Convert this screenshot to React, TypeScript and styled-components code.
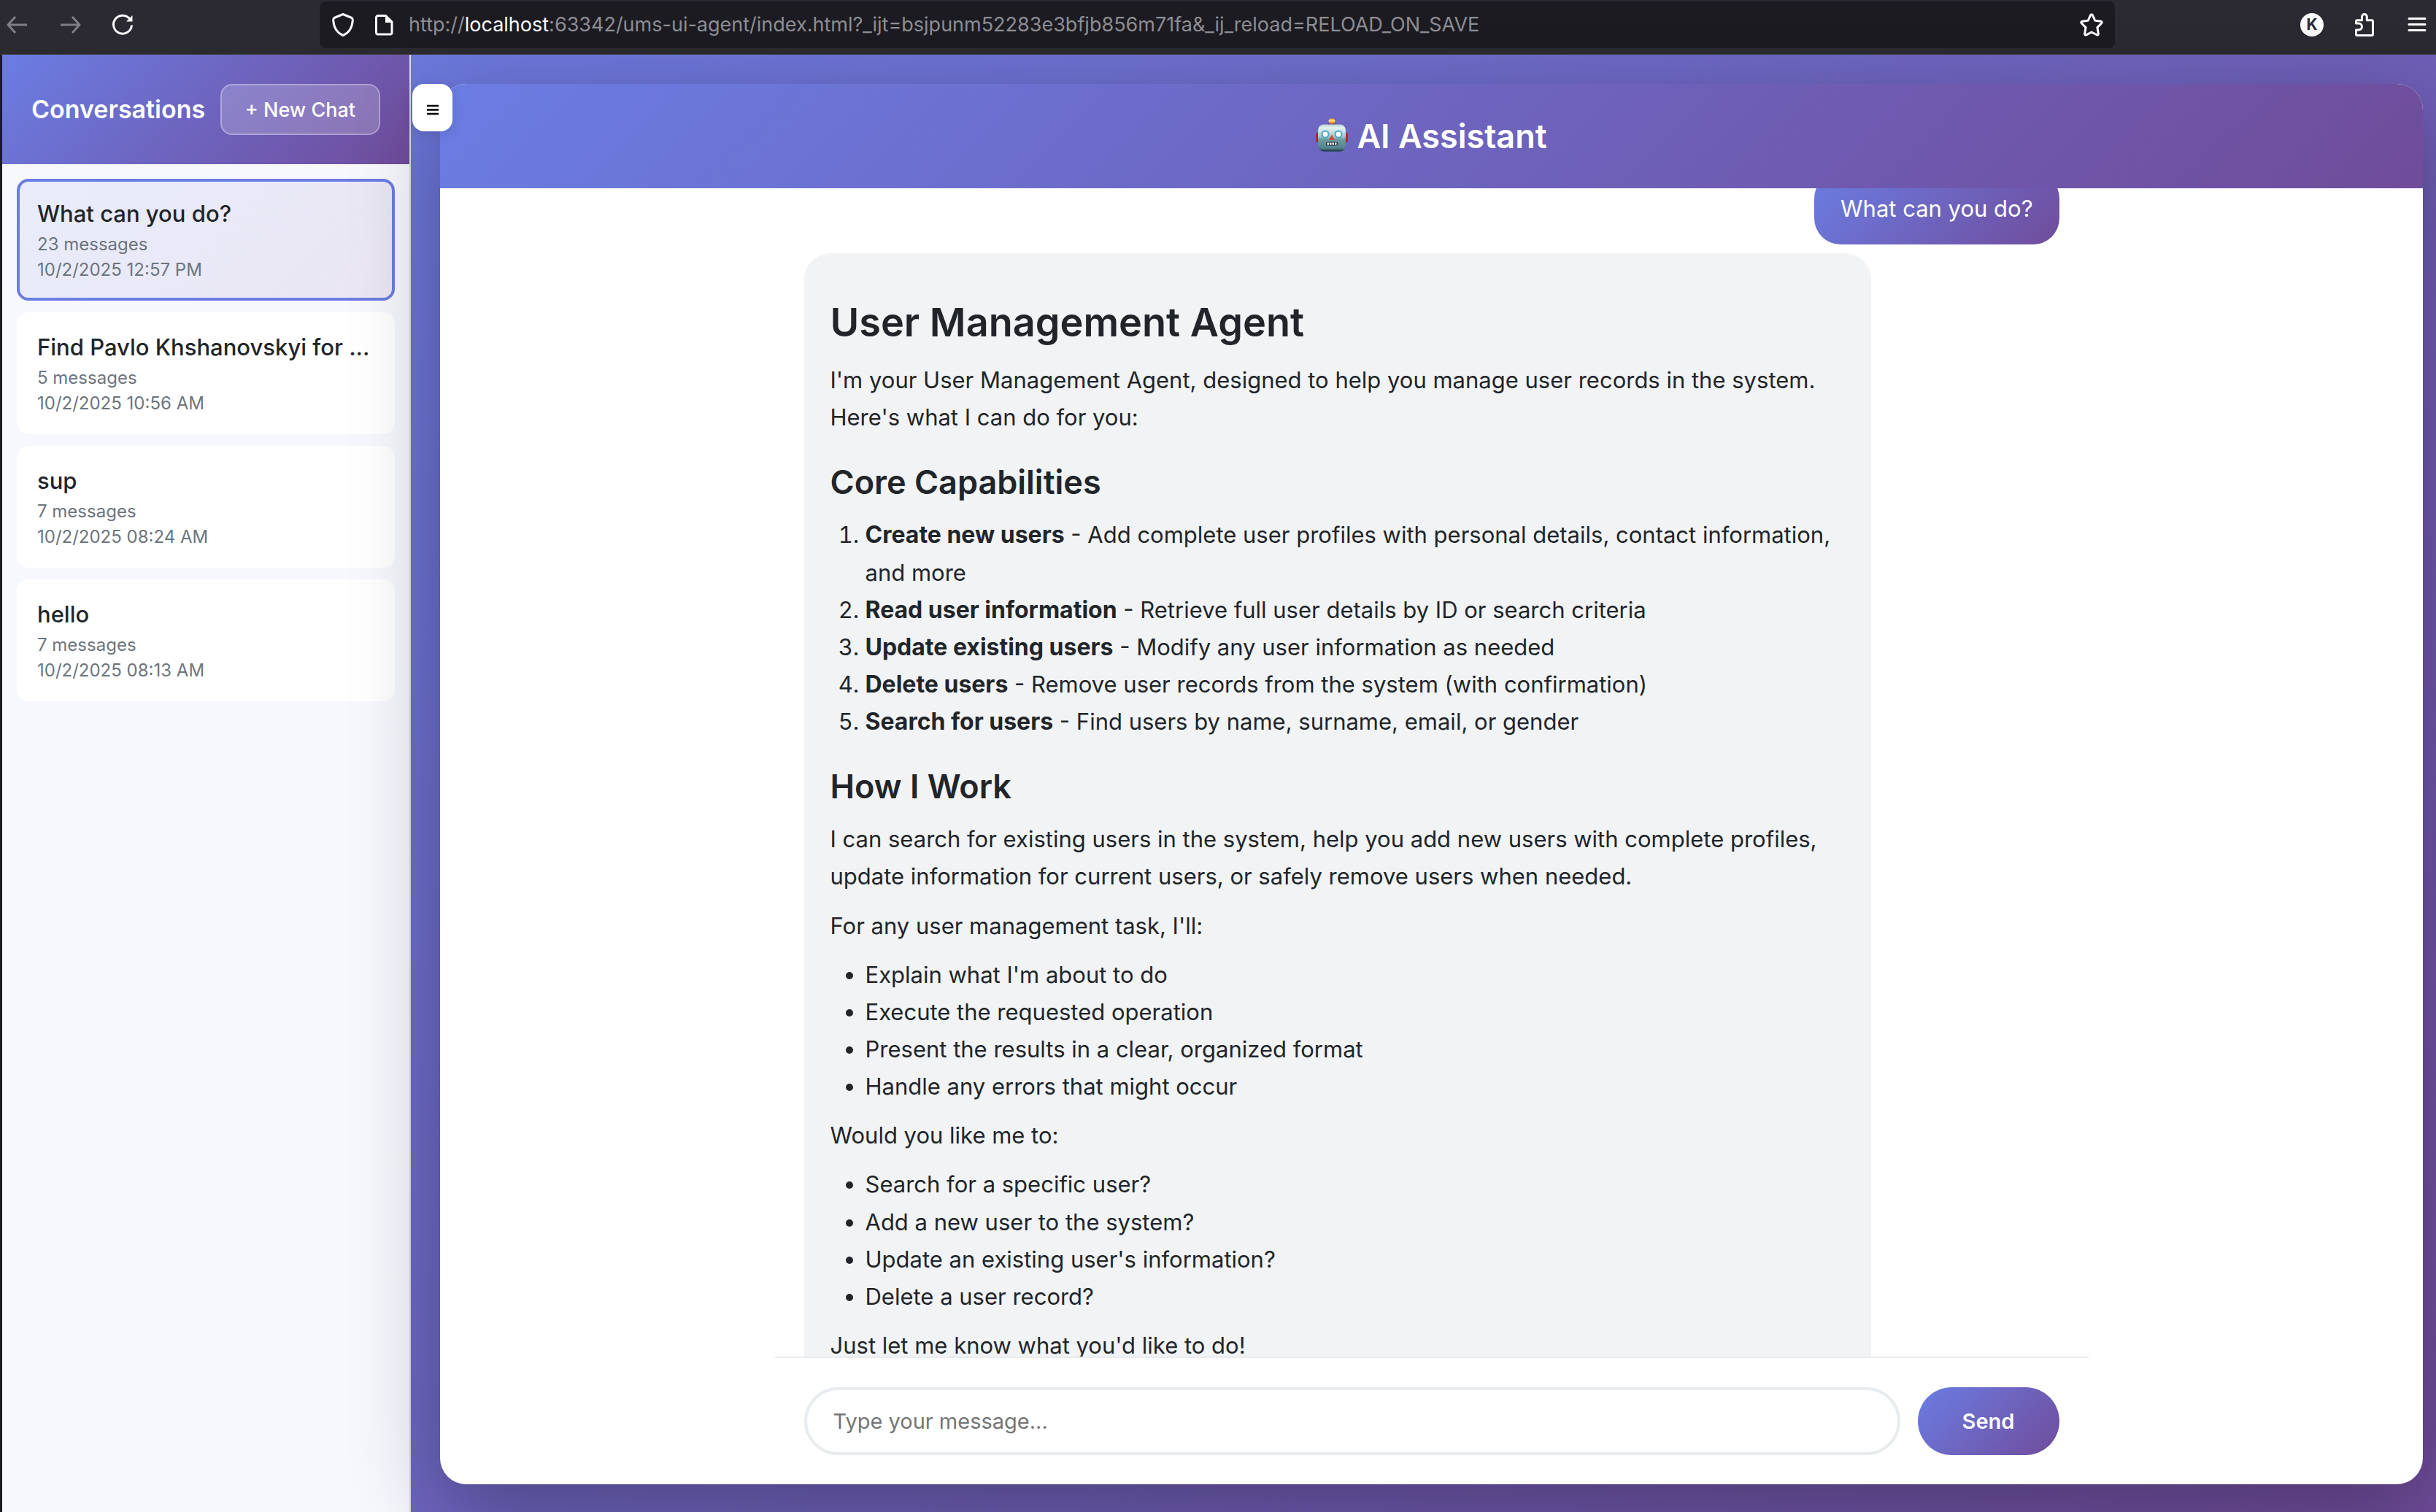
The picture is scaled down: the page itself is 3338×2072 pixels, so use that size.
import React, { useLayoutEffect, useRef } from "react";
import styled, { createGlobalStyle, css } from "styled-components";

const GlobalStyle = createGlobalStyle`
  *, *::before, *::after { box-sizing: border-box; }
  body {
    margin: 0;
    background: #1c1b22;
    font-family: Inter, "Noto Sans", sans-serif;
    color: #212529;
    overflow: hidden;
  }
  button, input { font-family: inherit; }
`;

const brand = "linear-gradient(135deg, #6b7de3 0%, #704c9b 100%)";

const Window = styled.div`
  display: flex;
  flex-direction: column;
  height: 100vh;
`;

/* ---------- browser toolbar ---------- */

const Toolbar = styled.header`
  display: flex;
  align-items: flex-start;
  flex: none;
  height: 75px;
  padding: 2px 6px 0 4px;
  background: linear-gradient(#2b2a33 0 75%, #2b2a2e);
  border-bottom: 1px solid #3d3c44;
`;

const IconGroup = styled.div<{ $gap: number }>`
  display: flex;
  align-items: center;
  gap: ${(p) => p.$gap}px;
  height: 64px;
`;

const ToolButton = styled.button<{ $dim?: boolean }>`
  display: flex;
  align-items: center;
  justify-content: center;
  width: 40px;
  height: 40px;
  padding: 0;
  border: 0;
  background: none;
  color: ${(p) => (p.$dim ? "#7f7e84" : "#fbfbfe")};
`;

const AddressBar = styled.div`
  display: flex;
  align-items: center;
  flex: 0 1 2460px;
  gap: 14px;
  height: 64px;
  margin-left: 250px;
  margin-right: auto;
  padding: 0 12px;
  border-radius: 8px;
  background: #1c1b22;
`;

const Address = styled.div`
  flex: 1;
  min-width: 0;
  overflow: hidden;
  white-space: nowrap;
  font-size: 27px;
  line-height: 40px;
  color: #8e8e93;
`;

const Host = styled.span`
  color: #fbfbfe;
`;

/* ---------- page ---------- */

const Page = styled.div`
  display: flex;
  flex: 1;
  min-height: 0;
  margin-left: 3px;
  background: ${brand};
`;

const Sidebar = styled.aside`
  flex: none;
  width: 560px;
  background: #f7f8fd;
  border-right: 2px solid #dcdce4;
`;

const SidebarHeader = styled.div`
  display: flex;
  align-items: center;
  justify-content: space-between;
  height: 150px;
  padding: 0 40px;
  background: ${brand};
  color: #fff;
`;

const SidebarTitle = styled.h2`
  margin: 0;
  font-size: 34px;
  font-weight: 600;
  line-height: 44px;
`;

const NewChat = styled.button`
  height: 70px;
  padding: 0 32px;
  border: 2px solid rgba(255, 255, 255, 0.3);
  border-radius: 16px;
  background: rgba(255, 255, 255, 0.2);
  color: #fff;
  font-size: 27px;
  font-weight: 500;
  white-space: nowrap;
`;

const ConversationList = styled.nav`
  display: flex;
  flex-direction: column;
  gap: 16px;
  padding: 20px;
`;

const Conversation = styled.button<{ $active?: boolean }>`
  display: flex;
  flex-direction: column;
  gap: 6px;
  padding: 24px;
  border: 4px solid transparent;
  border-radius: 16px;
  background: #fff;
  text-align: left;
  ${(p) =>
    p.$active &&
    css`
      border-color: #6b7de3;
      background: linear-gradient(135deg, #e8ecfb, #ebe6f3);
    `}
`;

const ConversationTitle = styled.span`
  align-self: stretch;
  overflow: hidden;
  text-overflow: ellipsis;
  white-space: nowrap;
  margin-bottom: 2px;
  font-size: 31px;
  font-weight: 500;
  line-height: 39px;
  color: #212529;
`;

const ConversationMeta = styled.span`
  font-size: 24px;
  line-height: 29px;
  color: #6c757d;
`;

const Main = styled.main`
  position: relative;
  display: flex;
  flex: 1;
  min-width: 0;
  padding: 40px 18px 38px 40px;
`;

const SidebarToggle = styled.button`
  position: absolute;
  top: 40px;
  left: 2px;
  display: flex;
  align-items: center;
  justify-content: center;
  width: 55px;
  height: 65px;
  padding: 0;
  border: 0;
  border-radius: 16px;
  background: #fff;
  color: #000;
  box-shadow: 0 4px 16px rgba(0, 0, 0, 0.12);
`;

const ChatCard = styled.section`
  display: flex;
  flex-direction: column;
  flex: 1;
  min-width: 0;
  overflow: hidden;
  border-radius: 36px;
  background: #fff;
  box-shadow: 0 40px 120px rgba(0, 0, 0, 0.3);
`;

const ChatHeader = styled.div`
  display: flex;
  align-items: center;
  justify-content: center;
  gap: 12px;
  flex: none;
  height: 143px;
  background: ${brand};
  color: #fff;
`;

const ChatTitle = styled.h1`
  margin: 0;
  font-size: 45px;
  font-weight: 600;
  line-height: 64px;
`;

const Messages = styled.div`
  display: flex;
  flex-direction: column;
  gap: 12px;
  flex: 1;
  min-height: 0;
  width: 100%;
  max-width: 1800px;
  margin: 0 auto;
  padding: 40px;
  overflow-y: auto;
  scrollbar-width: none;
`;

const Bubble = styled.article<{ $from: "user" | "agent" }>`
  flex: none;
  max-width: 85%;
  padding: 24px 36px;
  border-radius: 36px;
  font-size: 31px;
  line-height: 1.65;
  ${(p) =>
    p.$from === "user"
      ? css`
          align-self: flex-end;
          background: ${brand};
          color: #fff;
        `
      : css`
          align-self: flex-start;
          background: #f1f3f5;
        `}
`;

const Heading1 = styled.h1`
  margin: 32px 0 14px;
  font-size: 54px;
  font-weight: 600;
  line-height: 78px;
`;

const Heading2 = styled.h2`
  margin: 32px 0 14px;
  font-size: 45px;
  font-weight: 600;
  line-height: 64px;
`;

const Paragraph = styled.p`
  margin: 0 0 16px;
`;

const listStyle = css`
  margin: 0 0 16px;
  padding-left: 48px;
`;
const Numbered = styled.ol`
  ${listStyle}
`;
const Bulleted = styled.ul`
  ${listStyle}
`;

const Term = styled.strong`
  font-size: 32px;
  font-weight: 700;
  line-height: 1;
`;

const Composer = styled.form`
  display: flex;
  flex: none;
  gap: 24px;
  width: 100%;
  max-width: 1800px;
  margin: 0 auto;
  padding: 40px;
  border-top: 2px solid #e9ecef;
`;

const MessageInput = styled.input`
  flex: 1;
  min-width: 0;
  height: 93px;
  padding: 0 36px;
  border: 4px solid #e9ecef;
  border-radius: 50px;
  background: #fff;
  font-size: 29px;
  color: #212529;
  &::placeholder {
    color: #757575;
    opacity: 1;
  }
`;

const SendButton = styled.button`
  width: 194px;
  height: 93px;
  padding: 0;
  border: 0;
  border-radius: 50px;
  background: ${brand};
  color: #fff;
  font-size: 29px;
  font-weight: 600;
`;

/* ---------- icons ---------- */

const Glyph = ({ children, size = 32, width = 3 }: { children: React.ReactNode; size?: number; width?: number }) => (
  <svg
    width={size}
    height={size}
    viewBox={`0 0 ${size} ${size}`}
    fill="none"
    stroke="currentColor"
    strokeWidth={width}
    strokeLinecap="round"
    strokeLinejoin="round"
    aria-hidden="true"
  >
    {children}
  </svg>
);

const BackIcon = () => (
  <Glyph><path d="M13 5 3 16l10 11M3 16h26" strokeLinecap="butt" /></Glyph>
);
const ForwardIcon = () => (
  <Glyph><path d="M19 5l10 11-10 11M29 16H3" strokeLinecap="butt" /></Glyph>
);
const ReloadIcon = () => (
  <Glyph>
    <path d="M28.5 16.500A12.500 12.500 0 1 1 25.500 7.500" strokeLinecap="butt" />
    <path d="M29.500 3v8.500H21z" fill="currentColor" stroke="none" />
  </Glyph>
);
const ShieldIcon = () => (
  <Glyph><path d="M16 1.500 28 6.500Q29.500 7.500 29.300 10C28.500 20 24.500 27 16 30.500 7.500 27 3.500 20 2.700 10Q2.500 7.500 4 6.500Z" /></Glyph>
);
const PageIcon = () => (
  <Glyph>
    <path d="M8 3.500h10.500L27 12v14.500a2.500 2.500 0 0 1-2.500 2.500H8a2.500 2.500 0 0 1-2.500-2.500V6A2.500 2.500 0 0 1 8 3.500z" />
    <path d="M18 3v10h9z" fill="currentColor" stroke="none" />
  </Glyph>
);
const StarIcon = () => (
  <Glyph>
    <path d="M14.700 2.600a1.500 1.500 0 0 1 2.600 0l3.500 7.600 8.200 1a1.500 1.500 0 0 1 .8 2.500l-5.900 5.900 1.500 8.700a1.500 1.500 0 0 1-2.200 1.500L16 26l-7.200 3.800a1.500 1.500 0 0 1-2.200-1.500l1.500-8.700-5.900-5.900a1.500 1.500 0 0 1 .8-2.500l8.200-1z" />
  </Glyph>
);
const AccountIcon = () => (
  <svg width="32" height="32" viewBox="0 0 32 32" aria-hidden="true">
    <circle cx="16" cy="16" r="16" fill="#fbfbfe" />
    <text x="16" y="23" textAnchor="middle" fontFamily="Inter, sans-serif" fontSize="21" fontWeight="700" fill="#2b2a33">K</text>
  </svg>
);
const PuzzleIcon = () => (
  <Glyph>
    <path d="M4.500 14v-2.700a1.500 1.500 0 0 1 1.500-1.500h6.500V5a3.400 3.400 0 0 1 6.800 0v4.800H26a1.500 1.500 0 0 1 1.500 1.500V29a1.500 1.500 0 0 1-1.500 1.500H6A1.500 1.500 0 0 1 4.500 29v-6H8a4.500 4.500 0 0 0 0-9H4.500z" />
  </Glyph>
);
const MenuIcon = () => (
  <Glyph><path d="M5 7.500h22M5 15.500h22M5 23.500h22" /></Glyph>
);
const ToggleIcon = () => (
  <Glyph size={22}><path d="M3 8h16M3 13.500h16M3 19h16" strokeWidth="2.600" strokeLinecap="butt" /></Glyph>
);

const RobotIcon = () => (
  <svg width="44" height="50" viewBox="0 0 44 50" role="img" aria-label="Robot">
    <defs>
      <linearGradient id="head" x1="0" y1="0" x2="0" y2="1">
        <stop offset="0" stopColor="#b8cfcf" />
        <stop offset="0.120" stopColor="#e2f3f1" />
        <stop offset="0.450" stopColor="#a9c6c8" />
        <stop offset="0.550" stopColor="#6d9ca3" />
        <stop offset="0.880" stopColor="#54838c" />
        <stop offset="1" stopColor="#17323c" />
      </linearGradient>
      <linearGradient id="ball" x1="0" y1="0" x2="0" y2="1">
        <stop offset="0" stopColor="#e8942c" />
        <stop offset="0.450" stopColor="#ffe36a" />
        <stop offset="1" stopColor="#d9601c" />
      </linearGradient>
    </defs>
    <path d="M17 7h10v4H17z" fill="#5b4470" />
    <ellipse cx="22" cy="8" rx="5" ry="3" fill="#6d5686" />
    <ellipse cx="22" cy="4" rx="4.500" ry="3.800" fill="url(#ball)" />
    <rect x="0" y="20" width="5" height="13" rx="2" fill="#a92b30" />
    <rect x="39" y="20" width="5" height="13" rx="2" fill="#a92b30" />
    <rect x="3" y="8.500" width="38" height="37" rx="8" fill="url(#head)" />
    <circle cx="13" cy="22" r="5.500" fill="#4aa9c9" />
    <circle cx="31" cy="22" r="5.500" fill="#4aa9c9" />
    <circle cx="13" cy="22" r="3.400" fill="#fff" />
    <circle cx="31" cy="22" r="3.400" fill="#fff" />
    <path d="M22 22.500 26 30h-8z" fill="#c94a42" />
    <rect x="14" y="32.500" width="16" height="5" rx="2" fill="#1d2a30" />
    <path d="M15.500 33.500h2.500v3h-2.500zM19 33.500h2.500v3H19zM22.500 33.500H25v3h-2.500zM26 33.500h2.500v3H26z" fill="#fff" />
  </svg>
);

/* ---------- data ---------- */

const conversations = [
  { title: "What can you do?", count: 23, date: "10/2/2025 12:57 PM", active: true },
  { title: "Find Pavlo Khshanovskyi for ...", count: 5, date: "10/2/2025 10:56 AM" },
  { title: "sup", count: 7, date: "10/2/2025 08:24 AM" },
  { title: "hello", count: 7, date: "10/2/2025 08:13 AM" },
];

const capabilities = [
  ["Create new users", "Add complete user profiles with personal details, contact information, and more"],
  ["Read user information", "Retrieve full user details by ID or search criteria"],
  ["Update existing users", "Modify any user information as needed"],
  ["Delete users", "Remove user records from the system (with confirmation)"],
  ["Search for users", "Find users by name, surname, email, or gender"],
];

const steps = [
  "Explain what I'm about to do",
  "Execute the requested operation",
  "Present the results in a clear, organized format",
  "Handle any errors that might occur",
];

const offers = [
  "Search for a specific user?",
  "Add a new user to the system?",
  "Update an existing user's information?",
  "Delete a user record?",
];

export default function App() {
  const messages = useRef<HTMLDivElement>(null);

  useLayoutEffect(() => {
    if (messages.current) messages.current.scrollTop = 62;
  }, []);

  return (
    <Window>
      <GlobalStyle />
      <Toolbar>
        <IconGroup $gap={32}>
          <ToolButton $dim aria-label="Back"><BackIcon /></ToolButton>
          <ToolButton $dim aria-label="Forward"><ForwardIcon /></ToolButton>
          <ToolButton aria-label="Reload"><ReloadIcon /></ToolButton>
        </IconGroup>
        <AddressBar>
          <IconGroup $gap={16}>
            <ToolButton aria-label="Tracking protection"><ShieldIcon /></ToolButton>
            <ToolButton aria-label="Site information"><PageIcon /></ToolButton>
          </IconGroup>
          <Address role="textbox" aria-label="Address" contentEditable suppressContentEditableWarning spellCheck={false}>
            http://<Host>localhost</Host>:63342/ums-ui-agent/index.html?_ijt=bsjpunm52283e3bfjb856m71fa&amp;_ij_reload=RELOAD_ON_SAVE
          </Address>
          <ToolButton aria-label="Bookmark"><StarIcon /></ToolButton>
        </AddressBar>
        <IconGroup $gap={32}>
          <ToolButton aria-label="Account"><AccountIcon /></ToolButton>
          <ToolButton aria-label="Extensions"><PuzzleIcon /></ToolButton>
          <ToolButton aria-label="Menu"><MenuIcon /></ToolButton>
        </IconGroup>
      </Toolbar>

      <Page>
        <Sidebar>
          <SidebarHeader>
            <SidebarTitle>Conversations</SidebarTitle>
            <NewChat>+ New Chat</NewChat>
          </SidebarHeader>
          <ConversationList aria-label="Conversations">
            {conversations.map((c) => (
              <Conversation key={c.date} $active={c.active}>
                <ConversationTitle>{c.title}</ConversationTitle>
                <ConversationMeta>{c.count} messages</ConversationMeta>
                <ConversationMeta>{c.date}</ConversationMeta>
              </Conversation>
            ))}
          </ConversationList>
        </Sidebar>

        <Main>
          <ChatCard>
            <ChatHeader>
              <RobotIcon />
              <ChatTitle>AI Assistant</ChatTitle>
            </ChatHeader>
            <Messages ref={messages}>
              <Bubble $from="user">What can you do?</Bubble>
              <Bubble $from="agent">
                <Heading1>User Management Agent</Heading1>
                <Paragraph>
                  I'm your User Management Agent, designed to help you manage user records in the system. Here's what I
                  can do for you:
                </Paragraph>
                <Heading2>Core Capabilities</Heading2>
                <Numbered>
                  {capabilities.map(([name, text]) => (
                    <li key={name}>
                      <Term>{name}</Term> - {text}
                    </li>
                  ))}
                </Numbered>
                <Heading2>How I Work</Heading2>
                <Paragraph>
                  I can search for existing users in the system, help you add new users with complete profiles, update
                  information for current users, or safely remove users when needed.
                </Paragraph>
                <Paragraph>For any user management task, I'll:</Paragraph>
                <Bulleted>{steps.map((s) => <li key={s}>{s}</li>)}</Bulleted>
                <Paragraph>Would you like me to:</Paragraph>
                <Bulleted>{offers.map((s) => <li key={s}>{s}</li>)}</Bulleted>
                <Paragraph>Just let me know what you'd like to do!</Paragraph>
              </Bubble>
            </Messages>
            <Composer onSubmit={(e) => e.preventDefault()}>
              <MessageInput aria-label="Message" placeholder="Type your message..." />
              <SendButton type="submit">Send</SendButton>
            </Composer>
          </ChatCard>
          <SidebarToggle aria-label="Toggle sidebar"><ToggleIcon /></SidebarToggle>
        </Main>
      </Page>
    </Window>
  );
}
